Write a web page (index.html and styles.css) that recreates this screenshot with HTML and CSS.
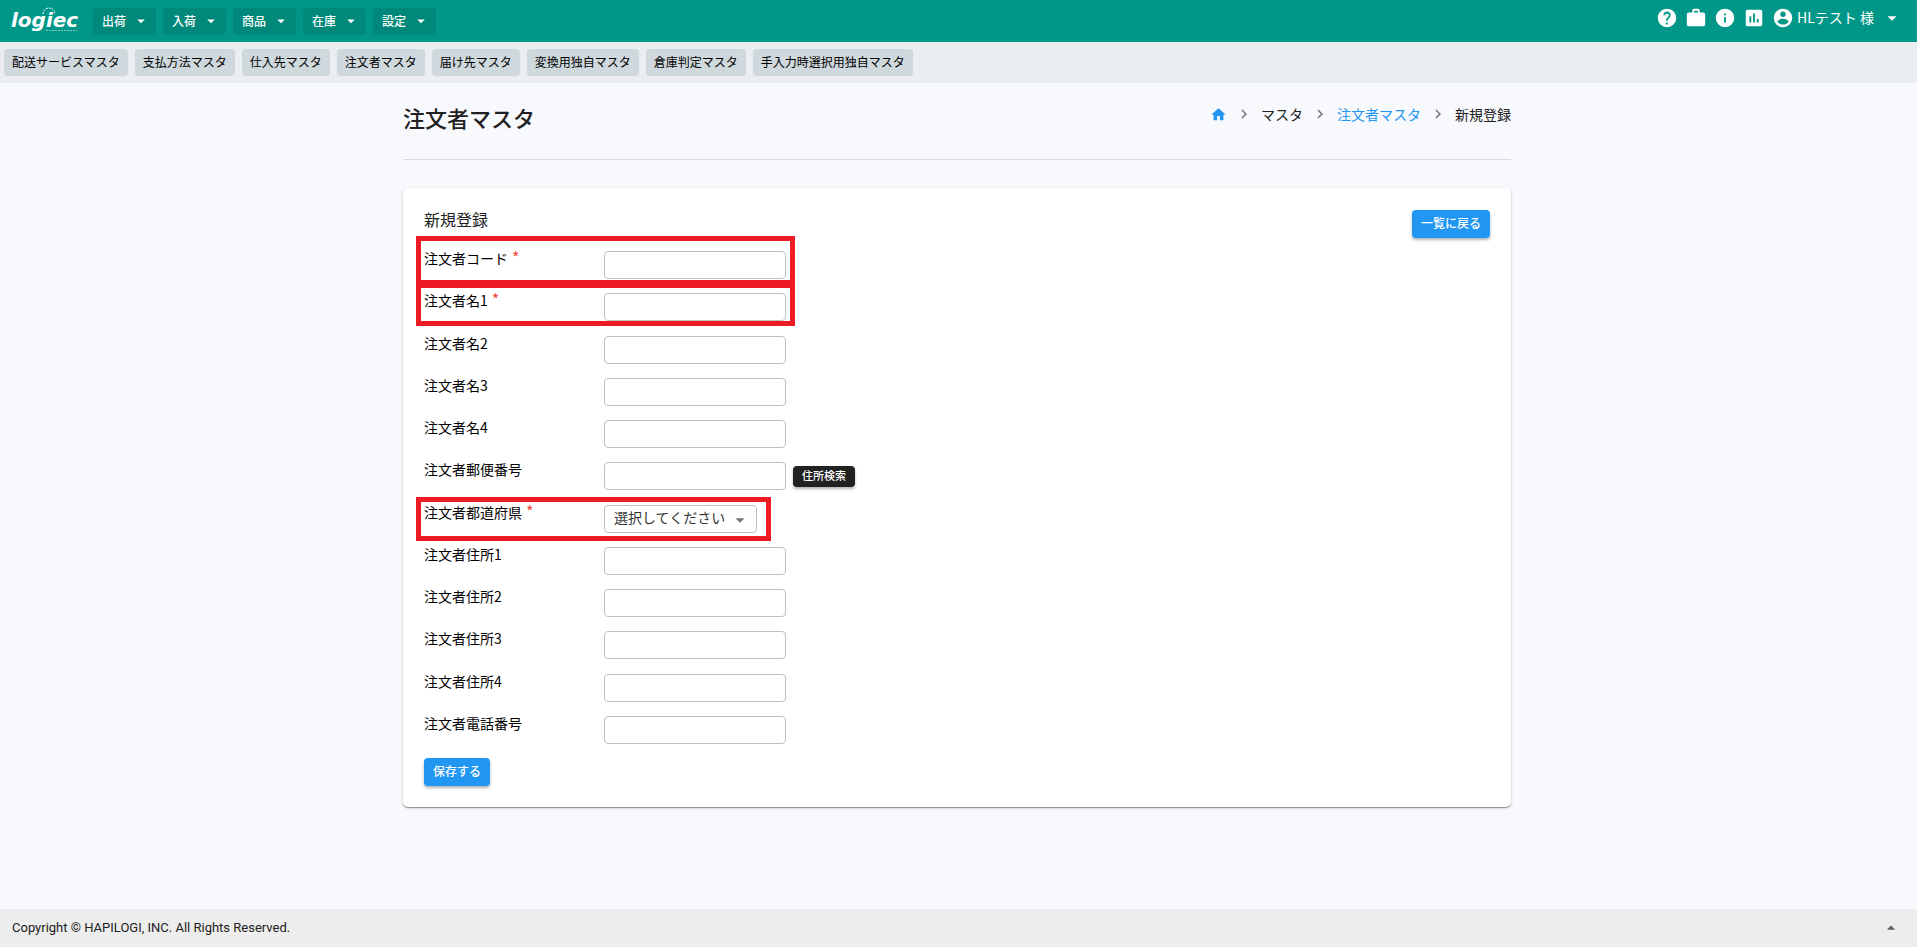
FILE: index.html
```html
<!DOCTYPE html>
<html lang="ja">
<head>
<meta charset="utf-8">
<title>注文者マスタ</title>
<link rel="stylesheet" href="styles.css">
</head>
<body>
<svg class="defs" aria-hidden="true">
  <symbol id="down" viewBox="0 0 24 24"><path d="M7 10l5 5 5-5z"/></symbol>
  <symbol id="up" viewBox="0 0 24 24"><path d="M7 14l5-5 5 5z"/></symbol>
  <symbol id="chevron" viewBox="0 0 24 24"><path d="M10 6L8.59 7.41 13.17 12l-4.58 4.59L10 18l6-6z"/></symbol>
</svg>
<header class="topbar">
  <a class="logo" href="#" aria-label="logiec">
    <svg viewBox="0 0 72 34" width="72" height="34">
      <text class="logo-text" x="1" y="23">logiec</text>
      <path class="logo-arc" d="M33 10a6 6 0 0 1 12 0"/>
      <path class="logo-line" d="M36 26.500H67"/>
    </svg>
  </a>
  <nav class="menu">
    <button class="menu-item">出荷<svg class="icon"><use href="#down"/></svg></button>
    <button class="menu-item">入荷<svg class="icon"><use href="#down"/></svg></button>
    <button class="menu-item">商品<svg class="icon"><use href="#down"/></svg></button>
    <button class="menu-item">在庫<svg class="icon"><use href="#down"/></svg></button>
    <button class="menu-item">設定<svg class="icon"><use href="#down"/></svg></button>
  </nav>
  <div class="tools">
    <button class="tool" aria-label="ヘルプ"><svg viewBox="0 0 24 24"><path d="M12 2C6.480 2 2 6.480 2 12s4.480 10 10 10 10-4.480 10-10S17.520 2 12 2zm1 17h-2v-2h2v2zm2.070-7.750l-.9.920C13.450 12.900 13 13.500 13 15h-2v-.5c0-1.100.450-2.100 1.170-2.830l1.240-1.260c.370-.360.590-.860.590-1.410 0-1.100-.9-2-2-2s-2 .9-2 2H8c0-2.210 1.790-4 4-4s4 1.790 4 4c0 .880-.360 1.680-.930 2.250z"/></svg></button>
    <button class="tool" aria-label="業務"><svg viewBox="0 0 24 24"><path d="M20 6h-4V4c0-1.110-.890-2-2-2h-4c-1.110 0-2 .890-2 2v2H4c-1.110 0-1.990.890-1.990 2L2 19c0 1.110.890 2 2 2h16c1.110 0 2-.890 2-2V8c0-1.110-.890-2-2-2zm-6 0h-4V4h4v2z"/></svg></button>
    <button class="tool" aria-label="お知らせ"><svg viewBox="0 0 24 24"><path d="M12 2C6.480 2 2 6.480 2 12s4.480 10 10 10 10-4.480 10-10S17.520 2 12 2zm1 15h-2v-6h2v6zm0-8h-2V7h2v2z"/></svg></button>
    <button class="tool" aria-label="レポート"><svg viewBox="0 0 24 24"><path d="M19 3H5c-1.100 0-2 .9-2 2v14c0 1.100.9 2 2 2h14c1.100 0 2-.9 2-2V5c0-1.100-.9-2-2-2zM9 17H7v-7h2v7zm4 0h-2V7h2v10zm4 0h-2v-4h2v4z"/></svg></button>
    <button class="user">
      <svg viewBox="0 0 24 24"><path d="M12 2C6.480 2 2 6.480 2 12s4.480 10 10 10 10-4.480 10-10S17.520 2 12 2zm0 3c1.660 0 3 1.340 3 3s-1.340 3-3 3-3-1.340-3-3 1.340-3 3-3zm0 14.200c-2.500 0-4.710-1.280-6-3.220.030-1.990 4-3.080 6-3.080 1.990 0 5.970 1.090 6 3.080-1.290 1.940-3.500 3.220-6 3.220z"/></svg>
      <span class="user-name">HLテスト 様</span>
      <svg><use href="#down"/></svg>
    </button>
  </div>
</header>
<nav class="subnav">
  <button class="subnav-item">配送サービスマスタ</button>
  <button class="subnav-item">支払方法マスタ</button>
  <button class="subnav-item">仕入先マスタ</button>
  <button class="subnav-item">注文者マスタ</button>
  <button class="subnav-item">届け先マスタ</button>
  <button class="subnav-item">変換用独自マスタ</button>
  <button class="subnav-item">倉庫判定マスタ</button>
  <button class="subnav-item">手入力時選択用独自マスタ</button>
</nav>
<main class="page">
  <div class="page-head">
    <h1 class="title">注文者マスタ</h1>
    <nav class="crumbs">
      <a class="crumb-link" href="#" aria-label="ホーム"><svg class="home" viewBox="0 0 24 24"><path d="M10 20v-6h4v6h5v-8h3L12 3 2 12h3v8z"/></svg></a>
      <svg class="sep"><use href="#chevron"/></svg>
      <span>マスタ</span>
      <svg class="sep"><use href="#chevron"/></svg>
      <a class="crumb-link" href="#">注文者マスタ</a>
      <svg class="sep"><use href="#chevron"/></svg>
      <span>新規登録</span>
    </nav>
  </div>
  <section class="card">
    <div class="card-head">
      <h2 class="card-title">新規登録</h2>
      <button class="btn">一覧に戻る</button>
    </div>
    <form class="form">
      <div class="fields">
        <div class="row marked marked-first"><label class="label" for="code">注文者コード<span class="req">*</span></label><input class="input" id="code" type="text"></div>
        <div class="row marked"><label class="label" for="name1">注文者名1<span class="req">*</span></label><input class="input" id="name1" type="text"></div>
        <div class="row"><label class="label" for="name2">注文者名2</label><input class="input" id="name2" type="text"></div>
        <div class="row"><label class="label" for="name3">注文者名3</label><input class="input" id="name3" type="text"></div>
        <div class="row"><label class="label" for="name4">注文者名4</label><input class="input" id="name4" type="text"></div>
        <div class="row"><label class="label" for="zip">注文者郵便番号</label><input class="input" id="zip" type="text"><button class="btn-dark" type="button">住所検索</button></div>
        <div class="row marked marked-select"><label class="label" for="pref">注文者都道府県<span class="req">*</span></label><span class="select-box"><select class="select" id="pref"><option>選択してください</option></select><svg class="select-arrow"><use href="#down"/></svg></span></div>
        <div class="row"><label class="label" for="addr1">注文者住所1</label><input class="input" id="addr1" type="text"></div>
        <div class="row"><label class="label" for="addr2">注文者住所2</label><input class="input" id="addr2" type="text"></div>
        <div class="row"><label class="label" for="addr3">注文者住所3</label><input class="input" id="addr3" type="text"></div>
        <div class="row"><label class="label" for="addr4">注文者住所4</label><input class="input" id="addr4" type="text"></div>
        <div class="row"><label class="label" for="tel">注文者電話番号</label><input class="input" id="tel" type="text"></div>
      </div>
      <button class="btn" type="button">保存する</button>
    </form>
  </section>
</main>
<footer class="footer">
  <span>Copyright © HAPILOGI, INC. All Rights Reserved.</span>
  <button class="to-top" aria-label="上へ"><svg><use href="#up"/></svg></button>
</footer>
</body>
</html>
```
FILE: styles.css
```css
*, *::after { box-sizing: border-box; }

body {
  margin: 0;
  min-height: 100vh;
  display: flex;
  flex-direction: column;
  background: #f8f9fd;
  color: #212121;
  font-family: "Noto Sans CJK JP", sans-serif;
  font-size: 14px;
  font-weight: 400;
  line-height: 20px;
}

button, input, select { font: inherit; color: inherit; }
button { border: 0; padding: 0; background: none; cursor: pointer; white-space: nowrap; }
a { color: inherit; text-decoration: none; }
svg { display: block; fill: currentColor; flex: none; }
.defs { position: absolute; width: 0; height: 0; }

.topbar {
  display: flex;
  align-items: center;
  height: 42px;
  padding: 0 14px 0 10px;
  background: #009688;
  color: #fff;
}
.logo { margin-right: 11px; }
.logo-text { font: italic bold 20px "DejaVu Sans", sans-serif; }
.logo-arc { fill: none; stroke: #fff; stroke-width: 1; stroke-dasharray: 2 1; }
.logo-line { stroke: #fff; stroke-width: 1; stroke-dasharray: 2 1; opacity: .5; }

.menu { display: flex; gap: 7px; }
.menu-item {
  display: flex;
  align-items: center;
  justify-content: space-between;
  width: 63px;
  height: 27px;
  padding: 0 6px 0 9px;
  border-radius: 4px;
  background: #00897b;
  font-size: 12px;
  font-weight: 500;
}
.menu-item .icon { width: 18px; height: 18px; }

.tools { display: flex; gap: 7px; margin: 0 0 6px auto; }
.tools svg { width: 22px; height: 22px; }
.user { display: flex; align-items: center; gap: 3px; }
.user-name { padding: 0 4px 2px 0; }

.subnav {
  display: flex;
  flex-wrap: wrap;
  gap: 7px;
  padding: 7px 4px;
  background: #eaeef1;
}
.subnav-item {
  height: 27px;
  padding: 0 8px 2px;
  border-radius: 4px;
  background: #cfd8dc;
  color: #000;
  font-size: 12px;
}

.page { width: 100%; max-width: 1111px; margin: 0 auto; padding-right: 3px; flex: 1; }
.page-head {
  display: flex;
  justify-content: space-between;
  align-items: flex-start;
  margin-bottom: 28px;
  padding: 20px 0 28px;
  border-bottom: 1px solid #d9dade;
}
.title { margin: 0; font-size: 22px; line-height: 28px; font-weight: 500; }
.crumbs { display: flex; align-items: center; padding-top: 1px; }
.crumb-link { color: #2196f3; }
.home { width: 17px; height: 17px; }
.sep { width: 18px; height: 18px; margin: 0 8px; color: #757575; }

.card {
  padding: 22px 21px 21px;
  border-radius: 5px;
  background: #fff;
  box-shadow: 0 1px 1px rgba(0, 0, 0, .4), 0 1px 4px rgba(0, 0, 0, .1);
}
.card-head { display: flex; justify-content: space-between; height: 39px; }
.card-title { margin: 0; font-size: 16px; font-weight: 400; line-height: 18px; }
.btn, .btn-dark {
  height: 28px;
  padding: 0 9px 2px;
  border-radius: 4px;
  background: #2196f3;
  color: #fff;
  font-size: 12px;
  font-weight: 500;
  box-shadow: 0 2px 3px rgba(0, 0, 0, .3);
}
.btn-dark {
  height: 21px;
  margin: 6px 0 0 7px;
  background: #212121;
  font-size: 11px;
  line-height: 19px;
}

.fields {
  display: grid;
  grid-auto-rows: 1fr;
  min-height: 507px;
  margin-bottom: 2px;
}
.row { position: relative; display: flex; align-items: flex-start; }
.label { width: 180px; color: #000; line-height: 18px; }
.req { margin-left: 4px; color: #f44336; font-size: 16px; line-height: 1; }
.input, .select {
  width: 182px;
  height: 28px;
  margin-top: 2px;
  padding: 0 9px;
  border: 1px solid #c0c0c0;
  border-radius: 4px;
  background: #fff;
}
.select-box { position: relative; }
.select { width: 153px; appearance: none; padding-bottom: 3px; color: #333; }
.select-arrow {
  position: absolute;
  top: 6px;
  right: 6px;
  width: 22px;
  height: 22px;
  color: #757575;
  pointer-events: none;
}

.marked::after {
  content: "";
  position: absolute;
  top: -8px;
  left: -8px;
  width: 379px;
  height: 43px;
  border: 5px solid #ed1c24;
  pointer-events: none;
}
.marked-first::after { top: -13px; height: 49px; }
.marked-select::after { top: -6px; width: 355px; height: 44px; }

.footer {
  display: flex;
  align-items: center;
  justify-content: space-between;
  height: 38px;
  padding: 0 16px 0 12px;
  background: #ededed;
  font-family: Roboto, sans-serif;
  font-size: 13px;
}
.to-top { color: #616161; }
.to-top svg { width: 20px; height: 20px; }
```
